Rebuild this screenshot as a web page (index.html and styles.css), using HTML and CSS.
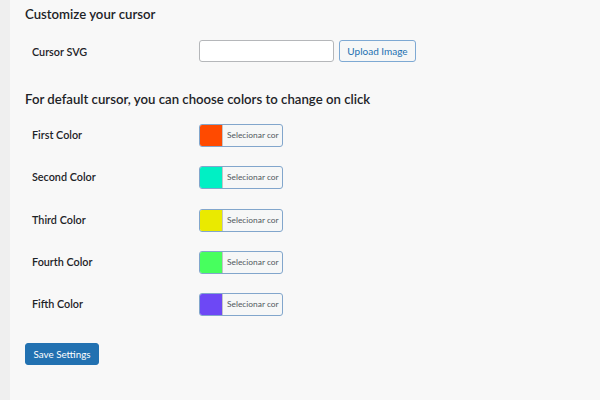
FILE: index.html
```html
<!DOCTYPE html>
<html>
<head>
<meta charset="utf-8">
<link rel="stylesheet" href="styles.css">
</head>
<body>
<div class="layout">
  <div class="strip"></div>
  <main class="main">
    <h2 class="heading">Customize your cursor</h2>
    <div class="field-row svg-row">
      <div class="label">Cursor SVG</div>
      <div class="control">
        <input class="text-input" type="text">
        <button class="btn-secondary">Upload Image</button>
      </div>
    </div>
    <h2 class="heading heading-colors">For default cursor, you can choose colors to change on click</h2>
    <div class="color-list">
      <div class="field-row color-row">
        <div class="label">First Color</div>
        <div class="control"><button class="color-result"><span class="swatch" style="background:#ff4a00"></span><span class="color-text">Selecionar cor</span></button></div>
      </div>
      <div class="field-row color-row">
        <div class="label">Second Color</div>
        <div class="control"><button class="color-result"><span class="swatch" style="background:#00f0c4"></span><span class="color-text">Selecionar cor</span></button></div>
      </div>
      <div class="field-row color-row">
        <div class="label">Third Color</div>
        <div class="control"><button class="color-result"><span class="swatch" style="background:#eaea00"></span><span class="color-text">Selecionar cor</span></button></div>
      </div>
      <div class="field-row color-row">
        <div class="label">Fourth Color</div>
        <div class="control"><button class="color-result"><span class="swatch" style="background:#47ff5e"></span><span class="color-text">Selecionar cor</span></button></div>
      </div>
      <div class="field-row color-row">
        <div class="label">Fifth Color</div>
        <div class="control"><button class="color-result"><span class="swatch" style="background:#6d48f5"></span><span class="color-text">Selecionar cor</span></button></div>
      </div>
    </div>
    <button class="btn-primary">Save Settings</button>
  </main>
</div>
</body>
</html>
```

FILE: styles.css
```css
* { box-sizing: border-box; }
html, body { margin: 0; padding: 0; }
body {
  font-family: Lato, "Open Sans", sans-serif;
  color: #1d2327;
  background: #f8f8f8;
  width: 600px;
  height: 400px;
  overflow: hidden;
}
.layout {
  display: flex;
  height: 400px;
}
.strip {
  width: 10px;
  flex: 0 0 10px;
  background: #efefef;
}
.main {
  flex: 1;
  padding: 5px 0 0 15px;
  background: #f8f8f8;
}
.heading {
  margin: 0;
  font-size: 13.2px;
  font-weight: 600;
  line-height: 18px;
  color: #1d2327;
}
.heading-colors {
  margin-top: 28px;
}
.field-row {
  display: grid;
  grid-template-columns: 174px 1fr;
  align-items: center;
}
.svg-row {
  margin-top: 17px;
  height: 22px;
}
.label {
  padding-left: 7px;
  font-size: 10.8px;
  font-weight: 600;
  color: #1d2327;
}
.control {
  display: flex;
  align-items: center;
  gap: 5px;
}
.text-input {
  width: 135px;
  height: 22px;
  border: 1px solid #b5b7ba;
  border-radius: 3px;
  background: #fff;
  margin: 0;
  padding: 0 6px;
}
.btn-secondary {
  height: 22px;
  width: 77px;
  margin: 0;
  padding: 0;
  border: 1px solid #7ea9d3;
  border-radius: 3px;
  background: #f6f7f7;
  color: #2271b1;
  font-family: Lato, "Open Sans", sans-serif;
  font-size: 10px;
}
.color-list {
  margin-top: 16px;
}
.color-row {
  height: 42.25px;
  align-items: start;
}
.color-row .label {
  line-height: 22px;
}
.color-result {
  display: flex;
  width: 84px;
  height: 23px;
  margin: 0;
  padding: 0;
  border: 1px solid #82a6cc;
  border-radius: 3px;
  background: #f6f7f7;
  overflow: hidden;
}
.swatch {
  width: 22px;
  height: 100%;
  flex: 0 0 22px;
}
.color-text {
  flex: 1;
  border-left: 1px solid #c3c4c7;
  padding-left: 4px;
  font-family: Lato, "Open Sans", sans-serif;
  font-size: 8.4px;
  color: #50575e;
  line-height: 21px;
  text-align: left;
  white-space: nowrap;
}
.btn-primary {
  display: block;
  margin: 8px 0 0 0;
  width: 74px;
  height: 22px;
  padding: 0;
  border: 1px solid #2271b1;
  border-radius: 3px;
  background: #2271b1;
  color: #fff;
  font-family: Lato, "Open Sans", sans-serif;
  font-size: 9.8px;
}
```
